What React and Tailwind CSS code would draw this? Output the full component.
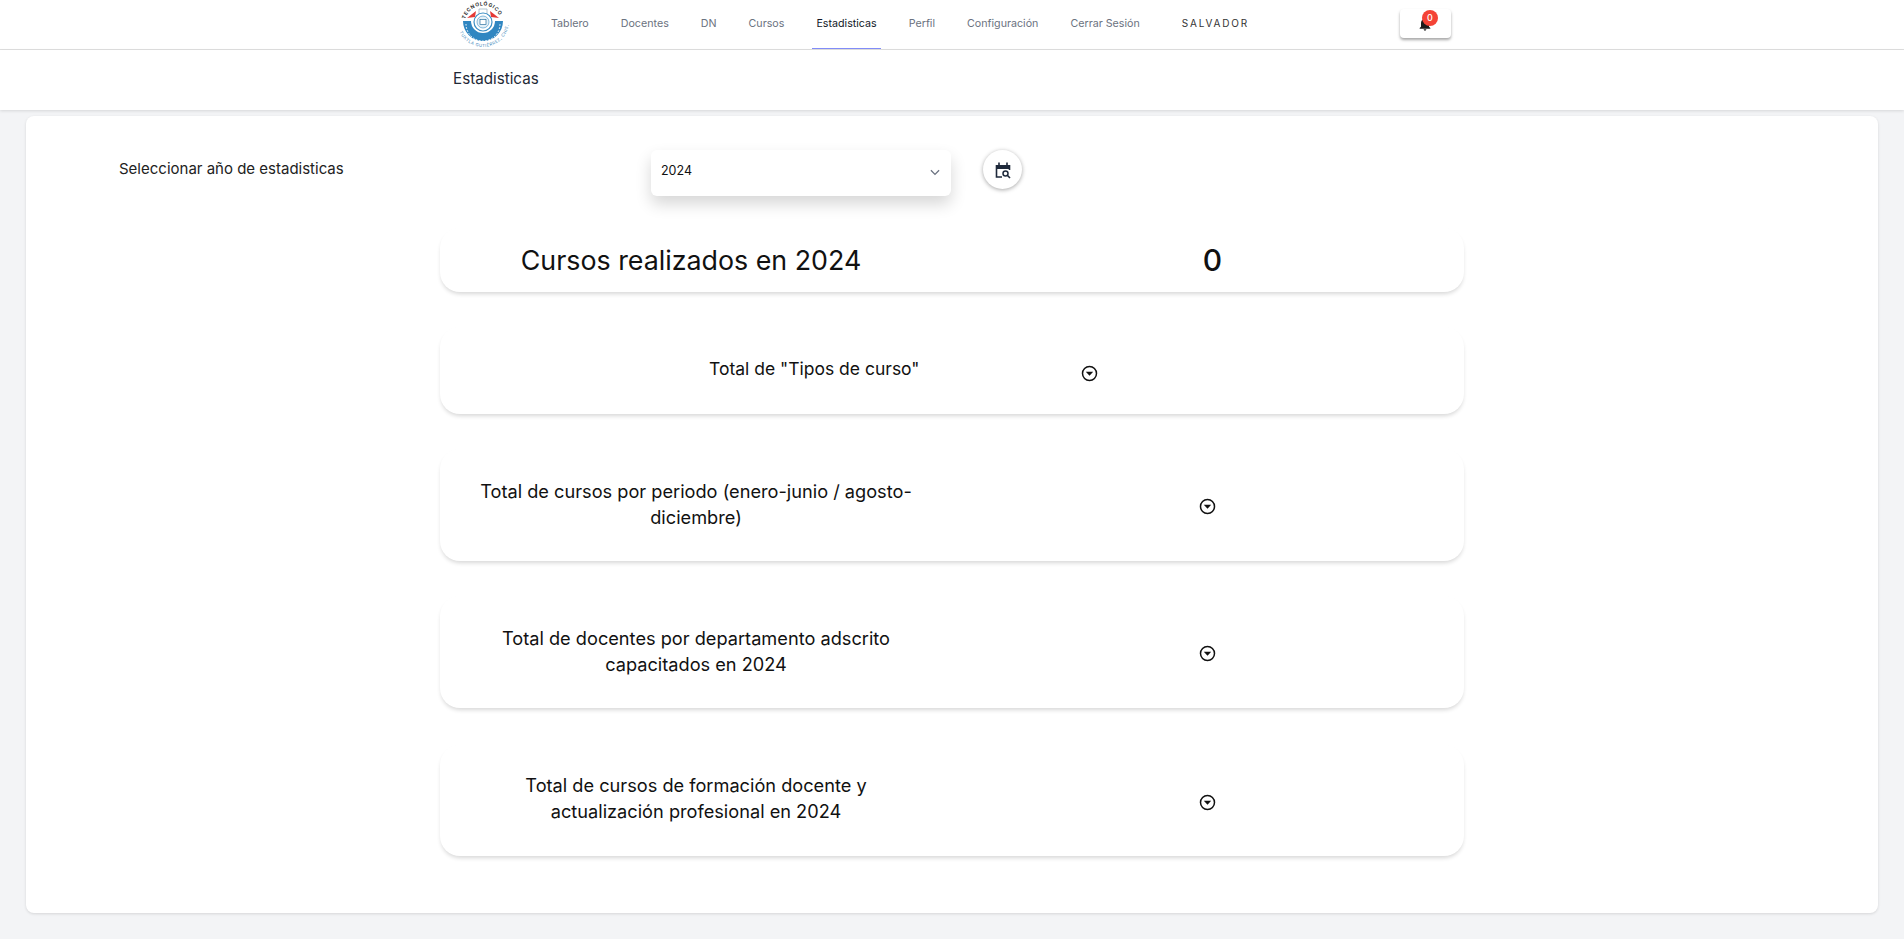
import React from "react";

const navLinks = ["Tablero", "Docentes", "DN", "Cursos", "Estadisticas", "Perfil", "Configuración", "Cerrar Sesión"];

const Logo = () => (
  <svg width="54" height="49" viewBox="0 0 54 49" className="shrink-0">
    <defs>
      <path id="logoTop" d="M8.5 24 A18.5 18.5 0 0 1 45.5 24" />
      <path id="logoBottom" d="M1 21 A26 26 0 0 0 53 21" />
    </defs>
    <text fontSize="5" fontWeight="700" fill="#333" letterSpacing="0.7" fontFamily="Inter, sans-serif">
      <textPath href="#logoTop" startOffset="8%">TECNOLÓGICO</textPath>
    </text>
    <text fontSize="4.2" fill="#3a86b8" letterSpacing="0.5" fontFamily="Inter, sans-serif">
      <textPath href="#logoBottom" startOffset="14%">TUXTLA GUTIÉRREZ, CHIS.</textPath>
    </text>
    <path d="M7 21 A20 20 0 0 0 47 21 L39 21 A12 12 0 0 1 15 21 Z" fill="#2f86c1" />
    <path d="M10 24 A17 17 0 0 0 44 24" fill="none" stroke="#fff" strokeWidth="1" strokeDasharray="1.6 1.6" />
    <path d="M11 18 L20 11 L19 17 Z" fill="#e53935" />
    <path d="M43 18 L34 11 L35 17 Z" fill="#e53935" />
    <path d="M23 9 H31 V14 L36 20 H18 L23 14 Z" fill="#fff" stroke="#9fb4c4" strokeWidth="0.8" />
    <circle cx="27" cy="22" r="9" fill="#fff" stroke="#3b8ec4" strokeWidth="1.2" />
    <circle cx="27" cy="22" r="6" fill="#e4f0f8" stroke="#3b8ec4" strokeWidth="0.6" />
    <rect x="24" y="19.5" width="6" height="5" fill="#fff" stroke="#2a6f9e" strokeWidth="0.7" />
  </svg>
);

const CaretCircle = () => (
  <svg width="17" height="17" viewBox="0 0 17 17" className="shrink-0">
    <circle cx="8.5" cy="8.5" r="7" fill="none" stroke="#111" strokeWidth="1.5" />
    <path d="M4.8 6.8 H12.2 L8.5 10.8 Z" fill="#111" />
  </svg>
);

const cardClass = "flex items-center rounded-[20px] bg-white shadow-[0_3px_4px_-1px_rgba(0,0,0,0.16)]";

const StatRow = ({ lines, className, textClass }) => (
  <section className={`${cardClass} ${className}`}>
    <h3 className={`w-1/2 text-center text-[18.2px] leading-[26.5px] text-[#111] ${textClass}`}>
      {lines.map((line) => (
        <div key={line}>{line}</div>
      ))}
    </h3>
    <div className="flex w-1/2 justify-center pr-[2px] pt-[3px]">
      <CaretCircle />
    </div>
  </section>
);

export default function App() {
  return (
    <div className="min-h-screen bg-[#f3f4f6] font-['Inter',sans-serif]">
      <nav className="h-[50px] border-b border-[#e0e0e0] bg-white">
        <div className="mx-auto flex h-[49px] w-[1024px] items-center pl-[16px]">
          <Logo />
          <div className="ml-[37px] flex h-full gap-[24px]">
            {navLinks.map((link) => (
              <a
                key={link}
                className={`flex items-center border-b-[1px] px-1 text-[10.7px] ${
                  link === "Estadisticas" ? "border-[#818cf8] text-[#111827]" : "border-transparent text-[#6b7280]"
                }`}
              >
                {link}
              </a>
            ))}
          </div>
          <span className="ml-[38px] pb-[2px] text-[10px] tracking-[0.18em] text-[#333]">SALVADOR</span>
          <button className="relative mb-[2px] ml-[151px] flex h-[29px] w-[51px] items-center justify-center rounded bg-white shadow-[0_2px_3px_rgba(0,0,0,0.35)]">
            <svg width="16" height="16" viewBox="0 0 24 24" fill="#1c1c1c">
              <path d="M12 22c1.1 0 2-.9 2-2h-4c0 1.1.9 2 2 2zm6-6v-5c0-3.07-1.63-5.64-4.5-6.32V4c0-.83-.67-1.5-1.5-1.5s-1.5.67-1.5 1.5v.68C7.64 5.36 6 7.92 6 11v5l-2 2v1h16v-1l-2-2z" />
            </svg>
            <span className="absolute left-[22px] top-[1px] flex h-[16px] w-[16px] items-center justify-center rounded-full bg-[#f44336] text-[9px] font-medium text-white">
              0
            </span>
          </button>
        </div>
      </nav>

      <header className="h-[60px] bg-white shadow-[0_1px_3px_rgba(0,0,0,0.12)]">
        <div className="mx-auto w-[1024px] pl-[13px] pt-[19px] text-[15.2px] leading-[20px] text-[#1f2937]">Estadisticas</div>
      </header>

      <main className="px-[26px] pt-[6px]">
        <div className="h-[797px] rounded-lg bg-white px-[414px] shadow-[0_1px_3px_rgba(0,0,0,0.12)]">
          <div className="-mx-[321px] flex h-[112px] items-start pt-[34px]">
            <span className="mt-[9px] w-[532px] text-[15px] leading-[20px] text-[#222]">Seleccionar año de estadisticas</span>
            <div className="flex h-[46px] w-[300px] items-center justify-between rounded-md bg-white pb-[3px] pl-[10px] pr-[9px] text-[12.5px] text-[#111] shadow-[0_8px_16px_rgba(0,0,0,0.16)]">
              2024
              <svg width="14" height="14" viewBox="0 0 24 24" fill="none" stroke="#6b7280" strokeWidth="2.2">
                <path d="M5 9l7 7 7-7" />
              </svg>
            </div>
            <button className="ml-[32px] flex h-[39px] w-[39px] items-center justify-center rounded-full bg-white shadow-[0_1px_4px_rgba(0,0,0,0.35)]">
              <svg width="18" height="18" viewBox="0 0 18 18" fill="none">
                <path d="M2.5 4 H15.5 V8 H2.5 Z" fill="#1e293b" />
                <path d="M5 1.5 V4 M13 1.5 V4" stroke="#1e293b" strokeWidth="1.6" />
                <path d="M2.5 4 V16 H8" stroke="#1e293b" strokeWidth="1.6" />
                <path d="M15.5 4 V9" stroke="#1e293b" strokeWidth="1.6" />
                <circle cx="11.5" cy="12.5" r="2.5" stroke="#1e293b" strokeWidth="1.5" />
                <path d="M13.5 14.5 L16 17" stroke="#1e293b" strokeWidth="1.6" />
              </svg>
            </button>
          </div>

          <section className={`${cardClass} h-[64px]`}>
            <h2 className="w-1/2 pr-[10px] text-center text-[26.8px] text-[#111]">Cursos realizados en 2024</h2>
            <div className="w-1/2 pl-[9px] text-center text-[30px] font-medium text-[#111]">0</div>
          </section>

          <section className={`${cardClass} mt-[35px] h-[87px] pl-[269px]`}>
            <h3 className="w-[372px] whitespace-nowrap pb-[2px] text-[17.5px] text-[#111]">Total de "Tipos de curso"</h3>
            <div className="mt-[5px]">
              <CaretCircle />
            </div>
          </section>

          <StatRow className="mt-[35px] h-[112px]" textClass="pb-[2px]" lines={["Total de cursos por periodo (enero-junio / agosto-", "diciembre)"]} />
          <StatRow className="mt-[35px] h-[112px]" textClass="pb-[2px]" lines={["Total de docentes por departamento adscrito", "capacitados en 2024"]} />
          <StatRow className="mt-[37px] h-[111px]" textClass="pb-[5px]" lines={["Total de cursos de formación docente y", "actualización profesional en 2024"]} />
        </div>
      </main>
    </div>
  );
}
